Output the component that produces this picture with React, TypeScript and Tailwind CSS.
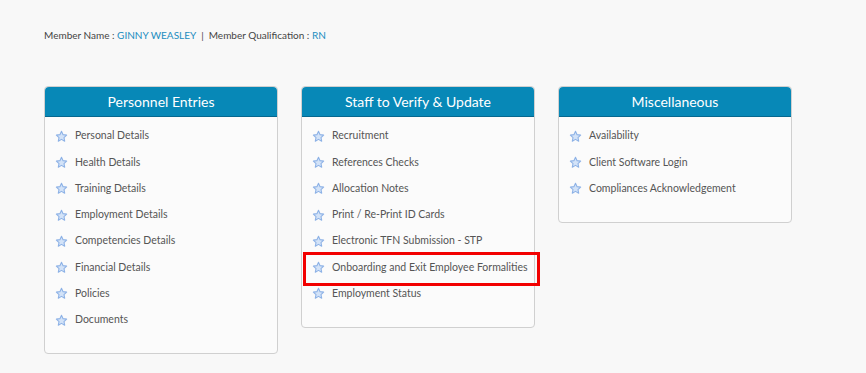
import React from "react";

const Star = () => (
  <svg width="13" height="13" viewBox="0 0 24 24" className="shrink-0">
    <path
      d="M12 2.5l2.9 6.1 6.6.8-4.9 4.6 1.3 6.6L12 17.3l-5.9 3.3 1.3-6.6-4.9-4.6 6.6-.8z"
      fill="#d3e3f8"
      stroke="#8db2e6"
      strokeWidth="2"
      strokeLinejoin="round"
    />
  </svg>
);

type CardProps = { title: string; items: string[]; highlight?: number };

const Card = ({ title, items, highlight }: CardProps) => (
  <div className="w-[234px] rounded-[4px] border border-[#d0d0d0] bg-[#fbfbfb]">
    <div className="flex h-[30px] items-center justify-center rounded-t-[4px] border-b border-[#05688f] bg-[#0788b7] text-[14px] text-white">
      {title}
    </div>
    <ul className="pt-[6px] pb-[20px]">
      {items.map((it, i) => (
        <li key={it} className="relative flex h-[26.3px] items-center gap-[7px] whitespace-nowrap pl-[10px] text-[10.5px] text-[#555]">
          <Star />
          <span>{it}</span>
          {highlight === i && (
            <div className="absolute left-[1px] top-[-2.5px] h-[34px] w-[237px] border-[3.5px] border-[#f20000]" />
          )}
        </li>
      ))}
    </ul>
  </div>
);

export default function App() {
  return (
    <div className="min-h-[373px] w-[866px] bg-[#f8f8f8] pl-[44px] pt-[28px]" style={{ fontFamily: "Lato, 'Open Sans', sans-serif" }}>
      <div className="whitespace-nowrap text-[10px] text-[#444]">
        Member Name : <span className="text-[#1b8dc0]">GINNY WEASLEY</span>
        <span className="mx-[5px]">|</span>
        Member Qualification : <span className="text-[#1b8dc0]">RN</span>
      </div>
      <div className="mt-[43px] flex items-start gap-[23px]">
        <Card
          title="Personnel Entries"
          items={[
            "Personal Details",
            "Health Details",
            "Training Details",
            "Employment Details",
            "Competencies Details",
            "Financial Details",
            "Policies",
            "Documents",
          ]}
        />
        <Card
          title="Staff to Verify & Update"
          highlight={5}
          items={[
            "Recruitment",
            "References Checks",
            "Allocation Notes",
            "Print / Re-Print ID Cards",
            "Electronic TFN Submission - STP",
            "Onboarding and Exit Employee Formalities",
            "Employment Status",
          ]}
        />
        <Card
          title="Miscellaneous"
          items={["Availability", "Client Software Login", "Compliances Acknowledgement"]}
        />
      </div>
    </div>
  );
}
